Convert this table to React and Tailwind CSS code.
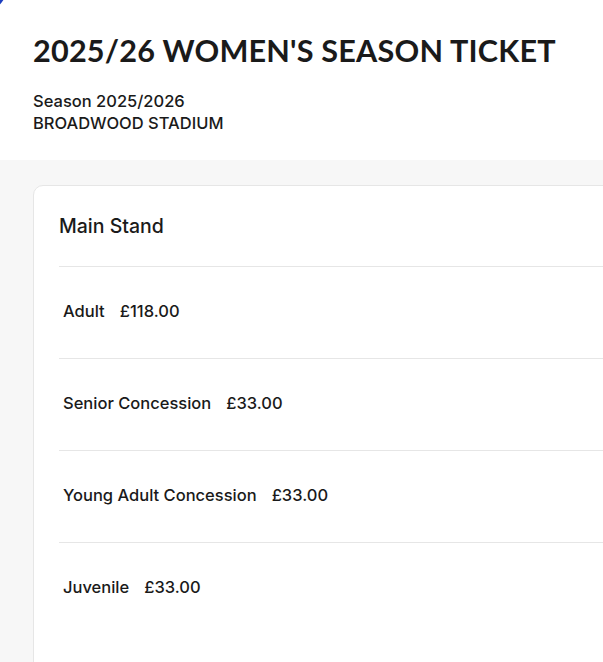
import React from "react";

const rows = [
  { label: "Adult", price: "£118.00" },
  { label: "Senior Concession", price: "£33.00" },
  { label: "Young Adult Concession", price: "£33.00" },
  { label: "Juvenile", price: "£33.00" },
];

export default function App() {
  return (
    <div className="relative min-h-screen w-full overflow-hidden bg-[#f7f7f7] text-[#1a1a1a] font-['Inter',sans-serif]">
      {/* corner badge, mostly off-screen */}
      <div className="absolute -left-[34px] -top-[30px] h-[40px] w-[40px] rounded-full border-[3px] border-[#1d3fbf]" />

      <header className="h-[160px] bg-white px-[33px] pt-[35px]">
        <h1 className="font-['Lato',sans-serif] text-[30.6px] font-bold leading-[32px] tracking-[0.2px]">
          2025/26 WOMEN'S SEASON TICKET
        </h1>
        <div className="mt-[23px] text-[16.5px] font-medium leading-[22px]">
          <p>Season 2025/2026</p>
          <p>BROADWOOD STADIUM</p>
        </div>
      </header>

      <main className="pl-[33px] pt-[25px]">
        <section className="w-[720px] rounded-[10px] border border-[#e6e6e6] bg-white pb-[60px] pl-[25px]">
          <h2 className="pt-[28px] pb-[28px] text-[19.5px] font-medium leading-[24px]">
            Main Stand
          </h2>
          {rows.map((r) => (
            <div
              key={r.label}
              className="flex h-[92px] items-start gap-[15px] border-t border-[#e6e6e6] pl-[4px] pt-[33px] text-[16.5px] font-medium leading-[22px]"
            >
              <span>{r.label}</span>
              <span>{r.price}</span>
            </div>
          ))}
        </section>
      </main>
    </div>
  );
}
